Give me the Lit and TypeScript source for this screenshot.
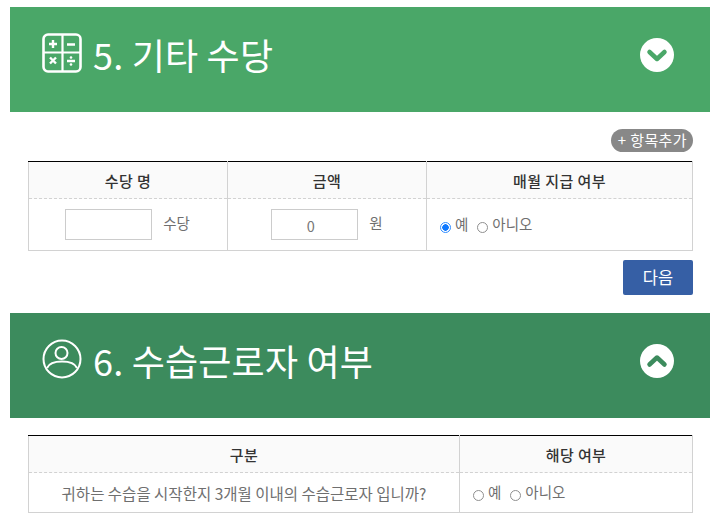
import { LitElement, html, css } from 'lit';
import { customElement } from 'lit/decorators.js';

const calcIcon = html`<svg class="icon" viewBox="0 0 40 40" fill="none" stroke="#fff" stroke-width="2.6">
  <rect x="1.500" y="1.500" width="37" height="37" rx="4.500"></rect>
  <path d="M20.500 1.500V38.500M1.500 19.500H38.500" stroke-width="2.200"></path>
  <path d="M7 11H15M11 7V15M25 11.500H33M8 24.500L14 30.500M14 24.500L8 30.500M25 28H33" stroke-width="2.400"></path>
  <circle cx="29" cy="24.500" r="1.300" fill="#fff" stroke="none"></circle>
  <circle cx="29" cy="31.500" r="1.300" fill="#fff" stroke="none"></circle>
</svg>`;

const personIcon = html`<svg class="icon" viewBox="0 0 40 40" fill="none" stroke="#fff" stroke-width="2">
  <circle cx="20" cy="20" r="18.500"></circle>
  <circle cx="19.500" cy="14" r="6"></circle>
  <path d="M5 29C7 24.500 12 22.500 20 22.500S33 24.500 35 29"></path>
</svg>`;

const toggle = (up: boolean) => html`<svg class="toggle" viewBox="0 0 34 34">
  <circle cx="17" cy="17" r="17" fill="#fff"></circle>
  <path d=${up ? 'M9.500 20.500L17 13.500L24.500 20.500' : 'M9.500 14L17 21L24.500 14'}
    fill="none" stroke=${up ? '#3c8b5d' : '#4aa768'} stroke-width="4.500" stroke-linecap="round" stroke-linejoin="round"></path>
</svg>`;

@customElement('app-root')
export class AppRoot extends LitElement {
  static styles = css`
    :host {
      display: block;
      width: 717px;
      height: 519px;
      overflow: hidden;
      background: #fff;
      padding-top: 7px;
      box-sizing: border-box;
      font-family: "Noto Sans CJK KR", "Noto Sans", sans-serif;
      color: #6f6f6f;
      font-size: 14.500px;
    }
    .bar {
      margin: 0 7px 0 10px;
      height: 105px;
      box-sizing: border-box;
      display: flex;
      align-items: center;
      padding: 0 36px 9px 32px;
      color: #fff;
      background: #4aa768;
    }
    .bar.dark { background: #3c8b5d; }
    .icon { width: 40px; height: 40px; margin: -5px 11px 0 0; flex: none; }
    .bar h2 {
      flex: 1;
      margin: -3px 0 0;
      font-size: 36px;
      font-weight: 400;
      line-height: 44px;
      letter-spacing: 0.2px;
    }
    .toggle { width: 34px; height: 34px; flex: none; }
    .tools {
      display: flex;
      justify-content: flex-end;
      margin: 17px 24px 9px 0;
    }
    .pill {
      height: 23px;
      line-height: 22px;
      padding: 0 6px 0 7px;
      border-radius: 12px;
      background: #888;
      color: #fff;
      font-size: 15px;
      letter-spacing: 0.4px;
      white-space: nowrap;
    }
    table {
      width: 665px;
      margin-left: 28px;
      border-collapse: collapse;
      table-layout: fixed;
      border-top: 1px solid #000;
    }
    th, td {
      border: 1px solid #d2d2d2;
      text-align: center;
      padding: 0;
    }
    tr:first-child th { border-top: 1px solid #000; }
    th {
      height: 36px;
      background: #fafafa;
      color: #333;
      font-size: 15px;
      font-weight: 500;
      letter-spacing: 0.4px;
      border-bottom: 1px dashed #d2d2d2;
    }
    td { height: 51px; border-top: 1px dashed #d2d2d2; }
    .second td { height: 39px; }
    td.left { text-align: left; padding-left: 13px; }
    .cell {
      display: flex;
      align-items: center;
      justify-content: center;
      gap: 11px;
    }
    .field {
      width: 87px;
      height: 31px;
      box-sizing: border-box;
      border: 1px solid #ccc;
      padding-right: 8px;
      text-align: center;
      line-height: 31px;
      color: #777;
    }
    .unit { position: relative; top: -2px; }
    .unit.wide { margin-right: 1px; }
    .radios { display: flex; align-items: center; }
    .radios input {
      appearance: none;
      width: 11px;
      height: 11px;
      box-sizing: border-box;
      margin: 6px 4px 0 0;
      flex: none;
      border: 1px solid #8f8f8f;
      border-radius: 50%;
      background: #fff;
    }
    .radios input:checked {
      border-color: #2f8cff;
      background: radial-gradient(circle, #0f78ff 0 3px, #fff 3.500px);
    }
    .radios label { display: flex; align-items: center; margin-right: 9px; line-height: 20px; }
    .radios span { position: relative; top: -1px; }
    .actions {
      display: flex;
      justify-content: flex-end;
      margin: 9px 24px 18px 0;
    }
    .next {
      width: 70px;
      height: 35px;
      line-height: 35px;
      text-align: center;
      background: #365fa5;
      border-radius: 2px;
      color: #fff;
      font-size: 16.500px;
    }
    .second { margin-top: 17px; }
    .question { font-size: 15.500px; }
  `;

  radios(name: string, yes: boolean) {
    return html`<div class="radios">
      <label><input type="radio" name=${name} ?checked=${yes} /><span>예</span></label>
      <label><input type="radio" name=${name} /><span>아니오</span></label>
    </div>`;
  }

  render() {
    return html`
      <div class="bar">${calcIcon}<h2>5. 기타 수당</h2>${toggle(false)}</div>
      <div class="tools"><div class="pill">+ 항목추가</div></div>
      <table>
        <colgroup><col style="width:199px" /><col style="width:199px" /><col /></colgroup>
        <tr><th>수당 명</th><th>금액</th><th>매월 지급 여부</th></tr>
        <tr>
          <td><div class="cell"><div class="field"></div><span class="unit wide">수당</span></div></td>
          <td><div class="cell"><div class="field">0</div><span class="unit">원</span></div></td>
          <td class="left">${this.radios('monthly', true)}</td>
        </tr>
      </table>
      <div class="actions"><div class="next">다음</div></div>
      <div class="bar dark">${personIcon}<h2>6. 수습근로자 여부</h2>${toggle(true)}</div>
      <table class="second">
        <colgroup><col style="width:431px" /><col /></colgroup>
        <tr><th>구분</th><th>해당 여부</th></tr>
        <tr>
          <td class="question">귀하는 수습을 시작한지 3개월 이내의 수습근로자 입니까?</td>
          <td class="left">${this.radios('probation', false)}</td>
        </tr>
      </table>
    `;
  }
}
